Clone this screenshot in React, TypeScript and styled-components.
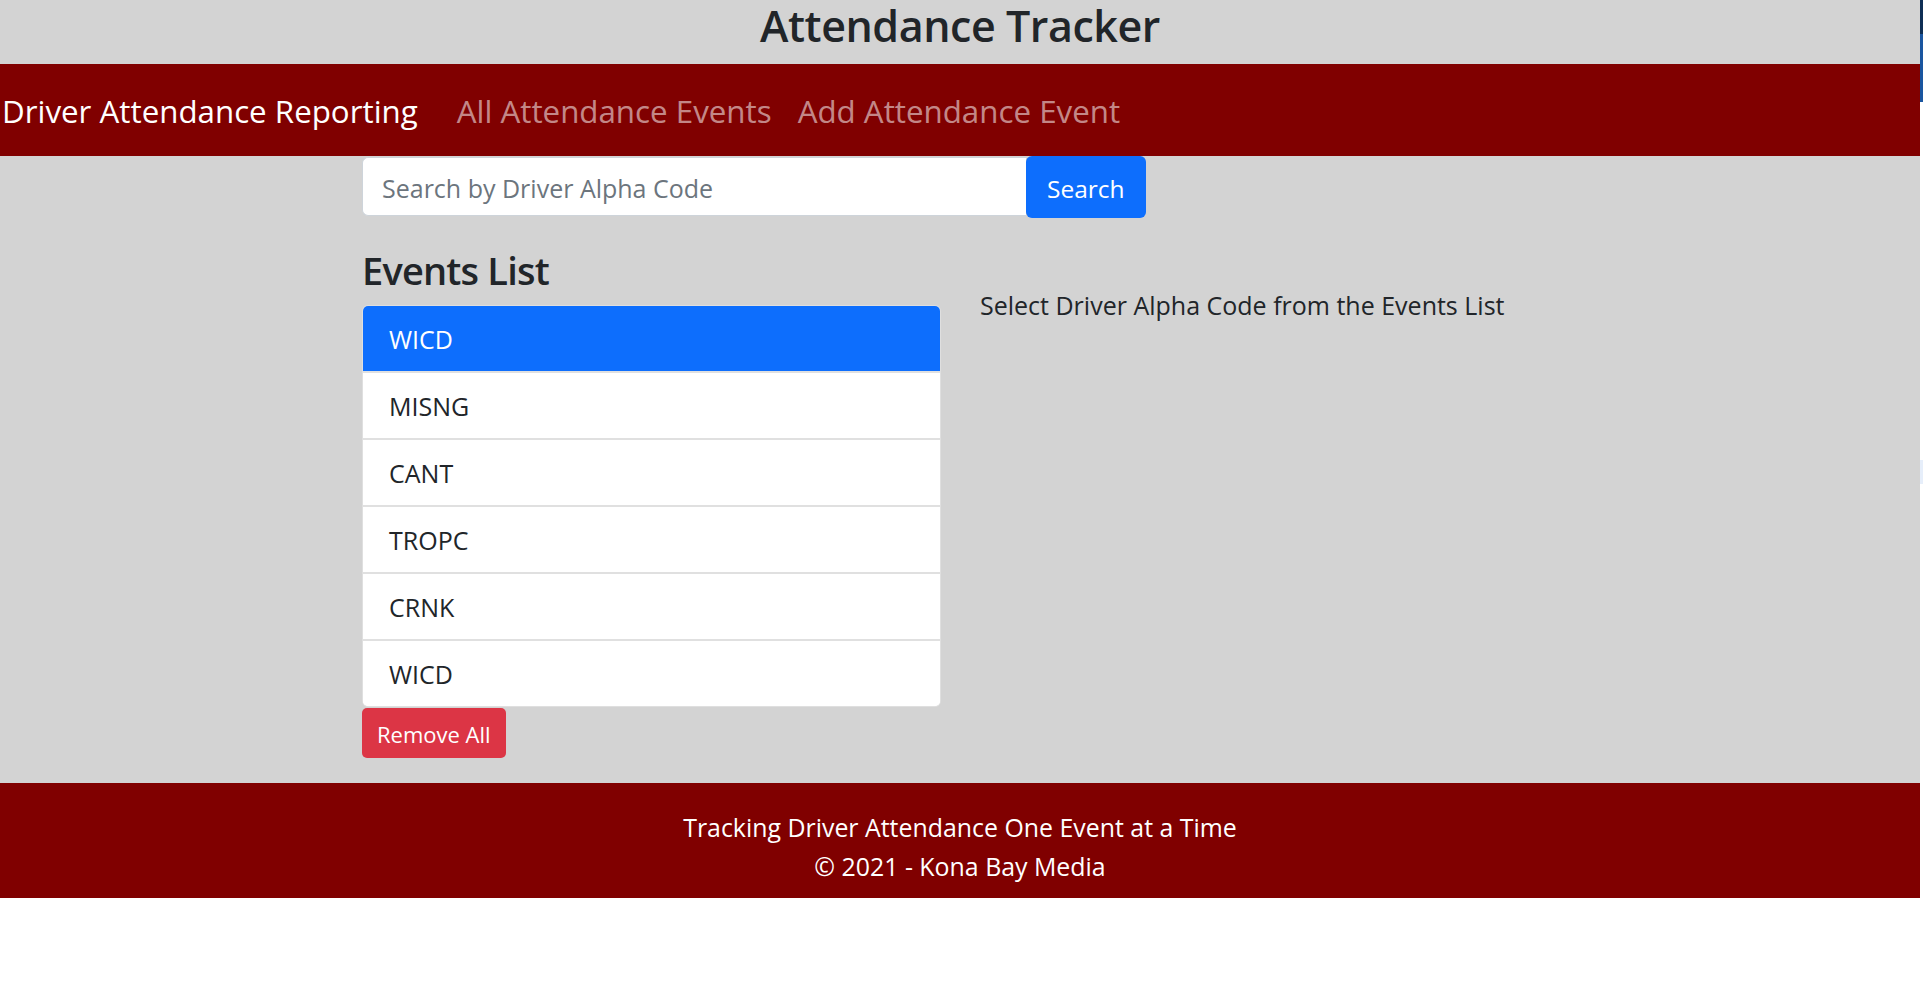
import React from "react";
import styled, { createGlobalStyle } from "styled-components";

const GlobalStyle = createGlobalStyle`
  html, body { margin: 0; padding: 0; background: #ffffff; }
  body {
    font-family: "Open Sans", Lato, sans-serif;
    color: #212529;
  }
  *, *::before, *::after { box-sizing: border-box; }
`;

const Shell = styled.div`
  display: flex;
  align-items: flex-start;
  width: 1923px;
`;

const Page = styled.div`
  flex: 0 0 1920px;
  width: 1920px;
`;

const EdgeStrip = styled.div`
  flex: 0 0 3px;
  height: 1002px;
  background: linear-gradient(
    to bottom,
    #0f2f55 0 34px,
    #1a56a0 34px 102px,
    #ffffff 102px 460px,
    #e6eefa 460px 484px,
    #ffffff 484px
  );
`;

const Top = styled.div`
  background: #d3d3d3;
`;

const TitleBar = styled.header`
  height: 64px;
  display: flex;
  justify-content: center;
  align-items: flex-start;
`;

const Title = styled.h1`
  margin: 0;
  font-size: 43px;
  font-weight: 600;
  letter-spacing: -0.45px;
  line-height: 52px;
  color: #212529;
`;

const NavBar = styled.nav`
  height: 92px;
  background: #800000;
  display: flex;
  align-items: center;
  padding: 2px 0 0 2px;
`;

const Brand = styled.a`
  font-size: 31.3px;
  line-height: 45px;
  color: #ffffff;
  text-decoration: none;
  margin-right: 26px;
`;

const NavLink = styled.a`
  font-size: 31.3px;
  line-height: 45px;
  color: rgba(255, 255, 255, 0.55);
  text-decoration: none;
  padding: 0 13px;
`;

const Container = styled.main`
  width: 1196px;
  margin: 0 auto;
  padding-bottom: 25px;
`;

const SearchGroup = styled.form`
  display: flex;
  align-items: flex-start;
  height: 62px;
`;

const SearchInput = styled.input`
  width: 664px;
  height: 59px;
  margin-top: 1px;
  border: 1px solid #ced4da;
  border-right: none;
  border-radius: 6px 0 0 6px;
  padding: 3px 19px 0;
  font-family: inherit;
  font-size: 25px;
  color: #212529;
  background: #ffffff;
  outline: none;
  &::placeholder {
    color: #6c757d;
  }
`;

const SearchButton = styled.button`
  height: 62px;
  background: #0d6efd;
  color: #ffffff;
  border: none;
  border-radius: 6px;
  padding: 2px 21px 0;
  font-family: inherit;
  font-size: 24.5px;
  cursor: pointer;
`;

const Columns = styled.section`
  display: grid;
  grid-template-columns: 579px 1fr;
  column-gap: 39px;
  margin-top: 28px;
`;

const LeftCol = styled.div`
  display: flex;
  flex-direction: column;
  align-items: flex-start;
`;

const Heading = styled.h3`
  margin: 0 0 11px;
  font-size: 38px;
  font-weight: 600;
  letter-spacing: -0.8px;
  line-height: 48px;
  color: #212529;
`;

const List = styled.ul`
  list-style: none;
  margin: 0;
  padding: 0;
  width: 100%;
  background: #ffffff;
  border: 1px solid rgba(0, 0, 0, 0.125);
  border-radius: 6px;
  overflow: hidden;
`;

const Item = styled.li<{ $active?: boolean }>`
  padding: 15px 26px 13px;
  font-size: 25px;
  line-height: 37px;
  background: ${(p) => (p.$active ? "#0d6efd" : "#ffffff")};
  color: ${(p) => (p.$active ? "#ffffff" : "#212529")};
  & + & {
    border-top: 2px solid #e0e0e0;
  }
`;

const RemoveButton = styled.button`
  margin-top: 1px;
  background: #dc3545;
  color: #ffffff;
  border: none;
  border-radius: 5px;
  padding: 9px 15px 7px;
  font-family: inherit;
  font-size: 22px;
  line-height: 34px;
  cursor: pointer;
`;

const HelpText = styled.p`
  margin: 40px 0 0;
  font-size: 25px;
  line-height: 38px;
  color: #212529;
`;

const Footer = styled.footer`
  background: #800000;
  color: #ffffff;
  text-align: center;
  padding: 25px 0 12px;
  font-size: 24.9px;
  line-height: 39px;
`;

const FooterLine = styled.p`
  margin: 0;
`;

const events = ["WICD", "MISNG", "CANT", "TROPC", "CRNK", "WICD"];

export default function App() {
  return (
    <>
      <GlobalStyle />
      <Shell>
        <Page>
          <Top>
            <TitleBar>
              <Title>Attendance Tracker</Title>
            </TitleBar>
            <NavBar>
              <Brand href="#">Driver Attendance Reporting</Brand>
              <NavLink href="#">All Attendance Events</NavLink>
              <NavLink href="#">Add Attendance Event</NavLink>
            </NavBar>
            <Container>
              <SearchGroup onSubmit={(e) => e.preventDefault()}>
                <SearchInput placeholder="Search by Driver Alpha Code" />
                <SearchButton type="submit">Search</SearchButton>
              </SearchGroup>
              <Columns>
                <LeftCol>
                  <Heading>Events List</Heading>
                  <List>
                    {events.map((ev, i) => (
                      <Item key={i} $active={i === 0}>
                        {ev}
                      </Item>
                    ))}
                  </List>
                  <RemoveButton type="button">Remove All</RemoveButton>
                </LeftCol>
                <div>
                  <HelpText>Select Driver Alpha Code from the Events List</HelpText>
                </div>
              </Columns>
            </Container>
          </Top>
          <Footer>
            <FooterLine>Tracking Driver Attendance One Event at a Time</FooterLine>
            <FooterLine>© 2021 - Kona Bay Media</FooterLine>
          </Footer>
        </Page>
        <EdgeStrip />
      </Shell>
    </>
  );
}
